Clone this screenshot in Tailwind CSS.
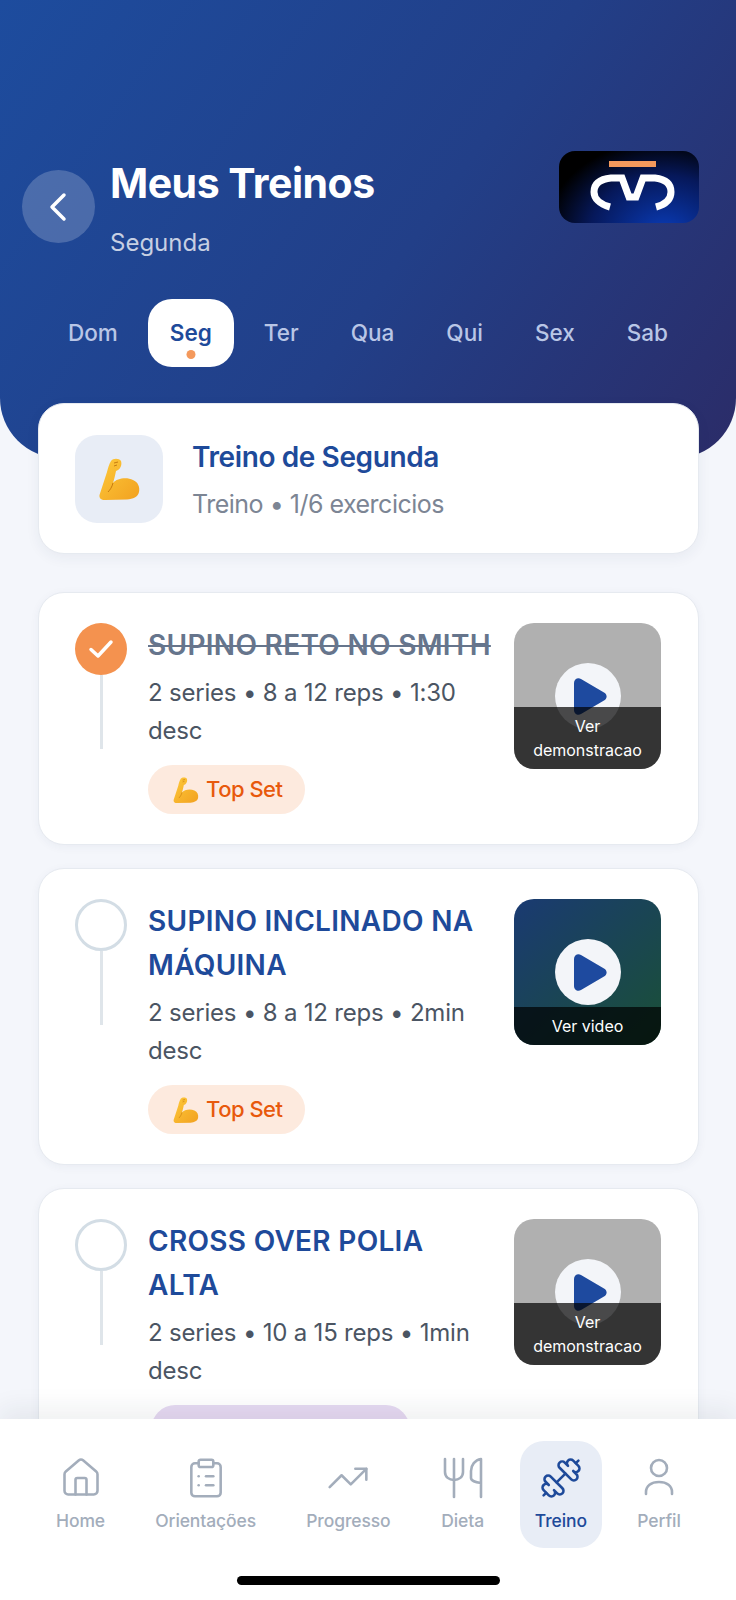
<!DOCTYPE html>
<html lang="pt-BR">
<head>
  <meta charset="UTF-8" />
  <meta name="viewport" content="width=device-width, initial-scale=1" />
  <title>Meus Treinos</title>
  <script src="https://cdn.jsdelivr.net/npm/@tailwindcss/browser@4"></script>
</head>
<body class="bg-[#f4f6fb] font-['Inter',sans-serif]">
  <svg class="absolute h-0 w-0">
    <defs>
      <linearGradient id="arm" x1="0" y1="0" x2="1" y2="1">
        <stop offset="0" stop-color="#fdc93a" />
        <stop offset="1" stop-color="#f2a120" />
      </linearGradient>
      <symbol id="biceps" viewBox="0 0 41 42">
        <path fill="url(#arm)" d="M12 3C14 0 20 0 22 3C23 6 22 10 19 12L17 13C16 18 15 22 14 25C18 20 28 19 34 22C39 24 41 29 40 34C39 39 34 41 28 41.5L6 42C2 42 0 40 .5 37L8 14C9 10 10 6 12 3Z" />
        <path fill="none" stroke="#c77c10" stroke-width="1" d="M14 25C13 29 11 32 9 34M15 5l4 -1M15 8l3 -1" />
      </symbol>
      <symbol id="play" viewBox="0 0 33 37">
        <path fill="#1e4a9f" d="M0 5C0 1 4-1 7 1L30 14.500C33.500 16.500 33.500 20.500 30 22.500L7 36C4 38 0 36 0 32Z" />
      </symbol>
    </defs>
  </svg>

  <div class="flex h-[1600px] flex-col overflow-hidden">
    <main class="min-h-0 flex-1 overflow-hidden">
      <!-- Header -->
      <header class="h-[458px] rounded-b-[60px] bg-[linear-gradient(125deg,#1d4c9e_0%,#223f88_55%,#2b2c68_100%)] pt-[151px]">
        <div class="flex items-start justify-between pl-[22px] pr-[37px]">
          <div class="mt-[6px] flex items-center gap-[15px]">
            <button class="-mt-[4px] flex h-[73px] w-[73px] items-center justify-center rounded-full bg-white/20">
              <svg width="22" height="30" viewBox="0 0 22 30" fill="none" stroke="white" stroke-width="3.500" stroke-linecap="round" stroke-linejoin="round"><path d="M16 3 4 15l12 12" /></svg>
            </button>
            <div>
              <h1 class="text-[41px] leading-[52px] font-bold tracking-[-0.5px] text-white">Meus Treinos</h1>
              <p class="mt-[17px] text-[24px] leading-[34px] text-white/75">Segunda</p>
            </div>
          </div>
          <div class="h-[72px] w-[140px] rounded-[16px] bg-[radial-gradient(ellipse_at_75%_115%,#0a3cb8_0%,#06185a_50%,#000_80%)]">
            <svg width="140" height="72" viewBox="0 0 140 72" fill="none">
              <rect x="50" y="10" width="47" height="6" fill="#f4995c" />
              <path stroke="white" stroke-width="7" d="M51 56C40 53 35 47 35 41C35 32 42 28 52 27H63L70 46H77L84 27H96C105 28 112 32 112 41C112 47 108 53 97 56" />
            </svg>
          </div>
        </div>

        <!-- Days -->
        <nav class="mt-[39px] flex justify-between px-[46px] text-[22.500px] leading-[68px] font-medium text-[#b9c6e6]">
          <span class="px-[22px]">Dom</span>
          <span class="relative rounded-[24px] bg-white px-[22px] font-semibold text-[#1e4a9a]">Seg<i class="absolute bottom-[8px] left-1/2 h-[9px] w-[9px] -translate-x-1/2 rounded-full bg-[#f4995c]"></i></span>
          <span class="px-[22px]">Ter</span>
          <span class="px-[22px]">Qua</span>
          <span class="px-[22px]">Qui</span>
          <span class="px-[22px]">Sex</span>
          <span class="px-[22px]">Sab</span>
        </nav>
      </header>

      <div class="relative -mt-[55px] flex flex-col pl-[38px] pr-[37px]">
        <!-- Summary -->
        <section class="flex h-[151px] items-center gap-[29px] rounded-[26px] border border-[#e6eaf0] bg-white pl-[36px] shadow-[0_4px_14px_rgba(30,50,90,0.06)]">
          <div class="flex h-[88px] w-[88px] items-center justify-center rounded-[22px] bg-[#e8edf6]">
            <svg width="41" height="42"><use href="#biceps" /></svg>
          </div>
          <div class="pt-[2px]">
            <h2 class="text-[28px] leading-[36px] font-semibold tracking-[-0.4px] text-[#1e4a9a]">Treino de Segunda</h2>
            <p class="mt-[12px] text-[25px] leading-[34px] tracking-[-0.5px] text-[#7c8594]">Treino • 1/6 exercicios</p>
          </div>
        </section>

        <!-- Exercise 1 -->
        <article class="mt-[38px] flex h-[253px] rounded-[26px] border border-[#e6eaf0] bg-white pl-[36px] pr-[37px] pt-[30px] shadow-[0_2px_10px_rgba(30,50,90,0.05)]">
          <div class="flex w-[52px] shrink-0 flex-col items-center">
            <div class="flex h-[52px] w-[52px] items-center justify-center rounded-full bg-[#f4924f]">
              <svg width="26" height="22" viewBox="0 0 26 22" fill="none" stroke="white" stroke-width="3.500" stroke-linecap="round" stroke-linejoin="round"><path d="M3 11.500 10 18 23 4" /></svg>
            </div>
            <div class="h-[74px] w-[3px] bg-[#dfe5ea]"></div>
          </div>
          <div class="ml-[21px] w-[346px] shrink-0">
            <h3 class="text-[28px] leading-[44px] font-semibold tracking-[0.3px] text-[#66758c] line-through decoration-2">SUPINO RETO NO SMITH</h3>
            <p class="mt-[7px] text-[24px] leading-[38px] tracking-[-0.2px] text-[#4b5563]">2 series • 8 a 12 reps • 1:30 desc</p>
            <div class="mt-[15px] inline-flex h-[49px] items-center gap-[7px] rounded-full bg-[#fdeade] pl-[25px] pr-[22px] text-[22px] font-medium tracking-[-0.5px] text-[#e8590c]">
              <svg width="26" height="26"><use href="#biceps" /></svg>Top Set
            </div>
          </div>
          <div class="relative ml-[20px] h-[146px] w-[147px] shrink-0 overflow-hidden rounded-[20px] bg-[#b0b0b0]">
            <div class="absolute left-[41px] top-[40px] flex h-[66px] w-[66px] items-center justify-center rounded-full bg-[#f3f5f9]">
              <svg class="ml-[5px]" width="33" height="37"><use href="#play" /></svg>
            </div>
            <div class="absolute inset-x-0 bottom-0 bg-black/70 px-[12px] py-[7px] text-center text-[16px] leading-[24px] text-white">Ver demonstracao</div>
          </div>
        </article>

        <!-- Exercise 2 -->
        <article class="mt-[23px] flex h-[297px] rounded-[26px] border border-[#e6eaf0] bg-white pl-[36px] pr-[37px] pt-[30px] shadow-[0_2px_10px_rgba(30,50,90,0.05)]">
          <div class="flex w-[52px] shrink-0 flex-col items-center">
            <div class="h-[52px] w-[52px] rounded-full border-[3px] border-[#d3dde5]"></div>
            <div class="h-[74px] w-[3px] bg-[#dfe5ea]"></div>
          </div>
          <div class="ml-[21px] w-[346px] shrink-0">
            <h3 class="text-[28px] leading-[44px] font-semibold tracking-[0.3px] text-[#1e4a9a]">SUPINO INCLINADO NA MÁQUINA</h3>
            <p class="mt-[7px] text-[24px] leading-[38px] tracking-[-0.2px] text-[#4b5563]">2 series • 8 a 12 reps • 2min desc</p>
            <div class="mt-[15px] inline-flex h-[49px] items-center gap-[7px] rounded-full bg-[#fdeade] pl-[25px] pr-[22px] text-[22px] font-medium tracking-[-0.5px] text-[#e8590c]">
              <svg width="26" height="26"><use href="#biceps" /></svg>Top Set
            </div>
          </div>
          <div class="relative ml-[20px] h-[146px] w-[147px] shrink-0 overflow-hidden rounded-[20px] bg-[linear-gradient(135deg,#1a3a72,#1a5036)]">
            <div class="absolute left-[41px] top-[40px] flex h-[66px] w-[66px] items-center justify-center rounded-full bg-[#f3f5f9]">
              <svg class="ml-[5px]" width="33" height="37"><use href="#play" /></svg>
            </div>
            <div class="absolute inset-x-0 bottom-0 bg-black/70 px-[12px] py-[7px] text-center text-[16px] leading-[24px] text-white">Ver video</div>
          </div>
        </article>

        <!-- Exercise 3 -->
        <article class="mt-[23px] flex h-[297px] rounded-[26px] border border-[#e6eaf0] bg-white pl-[36px] pr-[37px] pt-[30px] shadow-[0_2px_10px_rgba(30,50,90,0.05)]">
          <div class="flex w-[52px] shrink-0 flex-col items-center">
            <div class="h-[52px] w-[52px] rounded-full border-[3px] border-[#d3dde5]"></div>
            <div class="h-[74px] w-[3px] bg-[#dfe5ea]"></div>
          </div>
          <div class="ml-[21px] w-[346px] shrink-0">
            <h3 class="text-[28px] leading-[44px] font-semibold tracking-[0.3px] text-[#1e4a9a]">CROSS OVER POLIA ALTA</h3>
            <p class="mt-[7px] text-[24px] leading-[38px] tracking-[-0.2px] text-[#4b5563]">2 series • 10 a 15 reps • 1min desc</p>
            <div class="mt-[15px] ml-[3px] h-[49px] w-[259px] rounded-full bg-[#e6d9f2]"></div>
          </div>
          <div class="relative ml-[20px] h-[146px] w-[147px] shrink-0 overflow-hidden rounded-[20px] bg-[#b0b0b0]">
            <div class="absolute left-[41px] top-[40px] flex h-[66px] w-[66px] items-center justify-center rounded-full bg-[#f3f5f9]">
              <svg class="ml-[5px]" width="33" height="37"><use href="#play" /></svg>
            </div>
            <div class="absolute inset-x-0 bottom-0 bg-black/70 px-[12px] py-[7px] text-center text-[16px] leading-[24px] text-white">Ver demonstracao</div>
          </div>
        </article>
      </div>
    </main>

    <!-- Bottom nav -->
    <footer class="relative h-[181px] shrink-0 bg-white pt-[22px] shadow-[0_-10px_24px_rgba(30,40,60,0.07)]">
      <div class="flex justify-between pl-[41px] pr-[40px] text-[17.500px] font-medium tracking-[-0.1px] text-[#a3adbb]">
        <a class="flex h-[107px] flex-col items-center justify-between rounded-[24px] px-[15px] pb-[14px] pt-[15px]">
          <svg width="44" height="44" viewBox="0 0 24 24" fill="none" stroke="currentColor" stroke-width="1.400" stroke-linecap="round" stroke-linejoin="round"><path d="M15 21v-8a1 1 0 0 0-1-1h-4a1 1 0 0 0-1 1v8" /><path d="M3 10a2 2 0 0 1 .709-1.528l7-5.999a2 2 0 0 1 2.582 0l7 5.999A2 2 0 0 1 21 10v9a2 2 0 0 1-2 2H5a2 2 0 0 1-2-2z" /></svg>
          Home
        </a>
        <a class="flex h-[107px] flex-col items-center justify-between rounded-[24px] px-[15px] pb-[14px] pt-[15px]">
          <svg width="44" height="44" viewBox="0 0 24 24" fill="none" stroke="currentColor" stroke-width="1.400" stroke-linecap="round" stroke-linejoin="round"><rect x="8" y="2" width="8" height="4" rx="1" /><path d="M16 4h2a2 2 0 0 1 2 2v14a2 2 0 0 1-2 2H6a2 2 0 0 1-2-2V6a2 2 0 0 1 2-2h2" /><path d="M12 11h4" /><path d="M12 16h4" /><path d="M8 11h.01" /><path d="M8 16h.01" /></svg>
          Orientações
        </a>
        <a class="flex h-[107px] flex-col items-center justify-between rounded-[24px] px-[15px] pb-[14px] pt-[15px]">
          <svg width="44" height="44" viewBox="0 0 24 24" fill="none" stroke="currentColor" stroke-width="1.400" stroke-linecap="round" stroke-linejoin="round"><path d="M22 7 13.500 15.500 8.500 10.500 2 17" /><path d="M16 7h6v6" /></svg>
          Progresso
        </a>
        <a class="flex h-[107px] flex-col items-center justify-between rounded-[24px] px-[15px] pb-[14px] pt-[15px]">
          <svg width="44" height="44" viewBox="0 0 44 44" fill="none" stroke="currentColor" stroke-width="2.600" stroke-linecap="round" stroke-linejoin="round"><path d="M4 3v13c0 5 4 8 9 8s9-3 9-8V3" /><path d="M13 3v38" /><path d="M40 41V3c-6 1-10 6-10 12v7c0 3 4 4 10 5" /></svg>
          Dieta
        </a>
        <a class="flex h-[107px] flex-col items-center justify-between rounded-[24px] bg-[#e8edf6] px-[15px] pb-[14px] pt-[15px] text-[#1e4a9a]">
          <svg width="44" height="44" viewBox="0 0 24 24" fill="none" stroke="currentColor" stroke-width="1.400" stroke-linecap="round" stroke-linejoin="round"><path d="M17.596 12.768a2 2 0 1 0 2.829-2.829l-1.768-1.767a2 2 0 0 0 2.828-2.829l-2.828-2.828a2 2 0 0 0-2.829 2.828l-1.767-1.768a2 2 0 1 0-2.829 2.829z" /><path d="m2.500 21.500 1.400-1.400" /><path d="m20.100 3.900 1.400-1.400" /><path d="M5.343 21.485a2 2 0 1 0 2.829-2.828l1.767 1.768a2 2 0 1 0 2.829-2.829l-6.364-6.364a2 2 0 1 0-2.829 2.829l1.768 1.767a2 2 0 0 0-2.828 2.829z" /><path d="m9.600 14.400 4.800-4.800" /></svg>
          Treino
        </a>
        <a class="flex h-[107px] flex-col items-center justify-between rounded-[24px] px-[15px] pb-[14px] pt-[15px]">
          <svg width="44" height="44" viewBox="0 0 44 44" fill="none" stroke="currentColor" stroke-width="2.600" stroke-linecap="round"><circle cx="22" cy="12" r="8" /><path d="M9 38v-2c0-6 5-10 13-10s13 4 13 10v2" /></svg>
          Perfil
        </a>
      </div>
      <div class="mx-auto mt-[28px] h-[9px] w-[263px] rounded-full bg-black"></div>
    </footer>
  </div>
</body>
</html>
